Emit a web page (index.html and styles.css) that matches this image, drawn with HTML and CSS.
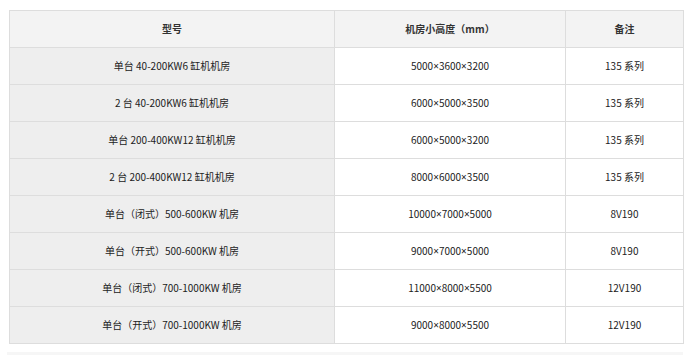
FILE: index.html
```html
<!DOCTYPE html>
<html lang="zh-CN">
<head>
<meta charset="utf-8">
<title>机房尺寸</title>
<link rel="stylesheet" href="styles.css">
</head>
<body>
<div class="page">
  <table class="spec">
    <colgroup>
      <col class="c1">
      <col class="c2">
      <col class="c3">
    </colgroup>
    <thead>
      <tr><th>型号</th><th>机房小高度（mm）</th><th>备注</th></tr>
    </thead>
    <tbody>
      <tr><td class="name">单台 40-200KW6 缸机机房</td><td>5000<span class="x">×</span>3600<span class="x">×</span>3200</td><td>135 系列</td></tr>
      <tr><td class="name">2 台 40-200KW6 缸机机房</td><td>6000<span class="x">×</span>5000<span class="x">×</span>3500</td><td>135 系列</td></tr>
      <tr><td class="name">单台 200-400KW12 缸机机房</td><td>6000<span class="x">×</span>5000<span class="x">×</span>3200</td><td>135 系列</td></tr>
      <tr><td class="name">2 台 200-400KW12 缸机机房</td><td>8000<span class="x">×</span>6000<span class="x">×</span>3500</td><td>135 系列</td></tr>
      <tr><td class="name">单台（闭式）500-600KW 机房</td><td>10000<span class="x">×</span>7000<span class="x">×</span>5000</td><td>8V190</td></tr>
      <tr><td class="name">单台（开式）500-600KW 机房</td><td>9000<span class="x">×</span>7000<span class="x">×</span>5000</td><td>8V190</td></tr>
      <tr><td class="name">单台（闭式）700-1000KW 机房</td><td>11000<span class="x">×</span>8000<span class="x">×</span>5500</td><td>12V190</td></tr>
      <tr><td class="name">单台（开式）700-1000KW 机房</td><td>9000<span class="x">×</span>8000<span class="x">×</span>5500</td><td>12V190</td></tr>
    </tbody>
  </table>
  <div class="strip"></div>
</div>
</body>
</html>
```
FILE: styles.css
```css
html, body {
  margin: 0;
  padding: 0;
  background: #ffffff;
}
.page {
  padding: 10px 0 0 9px;
  font-family: "Noto Sans CJK SC", "Noto Sans", sans-serif;
  font-size: 10px;
  color: #222222;
}
.spec {
  border-collapse: collapse;
  table-layout: fixed;
  width: 674px;
}
.c1 { width: 325px; }
.c2 { width: 231px; }
.c3 { width: 118px; }
.spec th,
.spec td {
  border: 1px solid #dddddd;
  height: 36px;
  padding: 0;
  text-align: center;
  vertical-align: middle;
  line-height: 14px;
}
.spec th {
  background: #f3f3f3;
  font-weight: bold;
  color: #333333;
}
.spec td.name {
  background: #eeeeee;
}
.x {
  font-family: "Noto Sans", sans-serif;
}
.strip {
  margin: 8px 0 0 -2px;
  width: 676px;
  height: 4px;
  background: #f6f6f6;
}
```
